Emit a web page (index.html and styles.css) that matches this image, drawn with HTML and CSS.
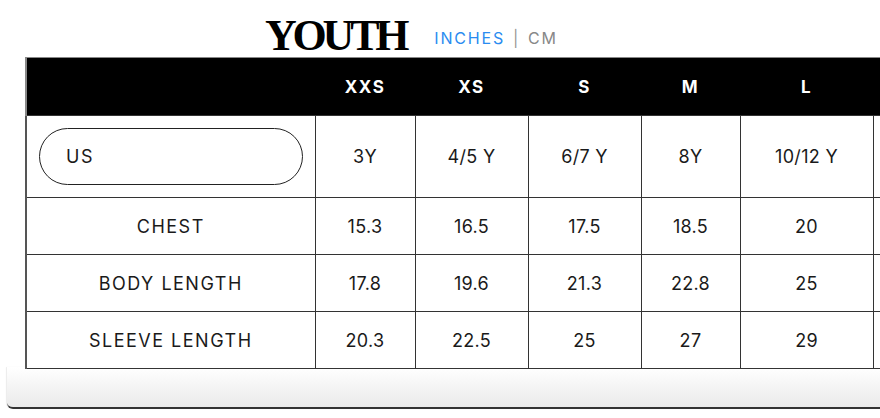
FILE: index.html
```html
<!DOCTYPE html>
<html>
<head>
<meta charset="utf-8">
<link rel="stylesheet" href="styles.css">
</head>
<body>
<div class="page">
  <div class="title-row">
    <h1 class="title">YOUTH</h1>
    <div class="units">
      <span class="unit active">INCHES</span>
      <span class="sep">|</span>
      <span class="unit">CM</span>
    </div>
  </div>
  <div class="table-wrap">
    <table class="chart">
      <colgroup>
        <col class="c0"><col class="c1"><col class="c2"><col class="c3"><col class="c4"><col class="c5"><col class="c6">
      </colgroup>
      <thead>
        <tr>
          <th></th><th>XXS</th><th>XS</th><th>S</th><th>M</th><th>L</th><th></th>
        </tr>
      </thead>
      <tbody>
        <tr class="region-row">
          <td class="label"><div class="pill">US</div></td>
          <td>3Y</td><td>4/5 Y</td><td>6/7 Y</td><td>8Y</td><td>10/12 Y</td><td></td>
        </tr>
        <tr>
          <td class="label">CHEST</td>
          <td>15.3</td><td>16.5</td><td>17.5</td><td>18.5</td><td>20</td><td></td>
        </tr>
        <tr>
          <td class="label">BODY LENGTH</td>
          <td>17.8</td><td>19.6</td><td>21.3</td><td>22.8</td><td>25</td><td></td>
        </tr>
        <tr>
          <td class="label">SLEEVE LENGTH</td>
          <td>20.3</td><td>22.5</td><td>25</td><td>27</td><td>29</td><td></td>
        </tr>
      </tbody>
    </table>
  </div>
  <div class="card-foot"></div>
</div>
</body>
</html>
```

FILE: styles.css
```css
html, body {
  margin: 0;
  padding: 0;
  background: #fff;
}
.page {
  width: 880px;
  height: 418px;
  overflow: hidden;
  font-family: "Inter", "Noto Sans", sans-serif;
  color: #1a1a1a;
}
.title-row {
  display: flex;
  align-items: flex-start;
  padding-left: 265px;
  height: 57px;
  box-sizing: border-box;
}
.title {
  margin: 14px 0 0 0;
  font-family: "Liberation Serif", "DejaVu Serif", serif;
  font-weight: 700;
  font-size: 44px;
  letter-spacing: -4.2px;
  line-height: 44px;
  color: #000;
}
.units {
  margin: 28px 0 0 29px;
  font-size: 16px;
  line-height: 20px;
  letter-spacing: 1.8px;
  display: flex;
  gap: 8px;
}
.unit { color: #888; }
.unit.active { color: #2a8cf0; }
.sep { color: #999; }

.table-wrap {
  margin-left: 25px;
  width: 855px;
  overflow: hidden;
  position: relative;
  z-index: 1;
}
.chart {
  border-collapse: collapse;
  table-layout: fixed;
  width: 970px;
  font-size: 18px;
  letter-spacing: 0.3px;
}
.c0 { width: 289px; }
.c1 { width: 100px; }
.c2 { width: 113px; }
.c3 { width: 113px; }
.c4 { width: 99px; }
.c5 { width: 133px; }
.c6 { width: 123px; }
.chart th {
  background: #000;
  color: #fff;
  font-weight: 700;
  font-size: 17px;
  letter-spacing: 1.5px;
  height: 57px;
  padding: 0;
  border-top: 1px solid #888;
  text-align: center;
}
.chart th:first-child { border-left: 2px solid #888; }
.chart td {
  border: 1px solid #333;
  text-align: center;
  padding: 0;
  height: 56px;
  font-weight: 400;
}
.chart td.label {
  border-left: 2px solid #555;
  letter-spacing: 1.5px;
}
.region-row td { height: 81px; }
.region-row td.label {
  text-align: left;
  padding: 0 12px 0 12px;
}
.pill {
  height: 57px;
  border: 1px solid #222;
  border-radius: 29px;
  display: flex;
  align-items: center;
  padding-left: 26px;
  box-sizing: border-box;
  width: 264px;
}
.card-foot {
  margin-left: 7px;
  margin-top: -2px;
  height: 40px;
  background: linear-gradient(#ffffff, #eaeaea);
  border-bottom: 2px solid #333;
  border-bottom-left-radius: 6px;
  box-shadow: -1px 0 1px rgba(0,0,0,0.08);
}
```
